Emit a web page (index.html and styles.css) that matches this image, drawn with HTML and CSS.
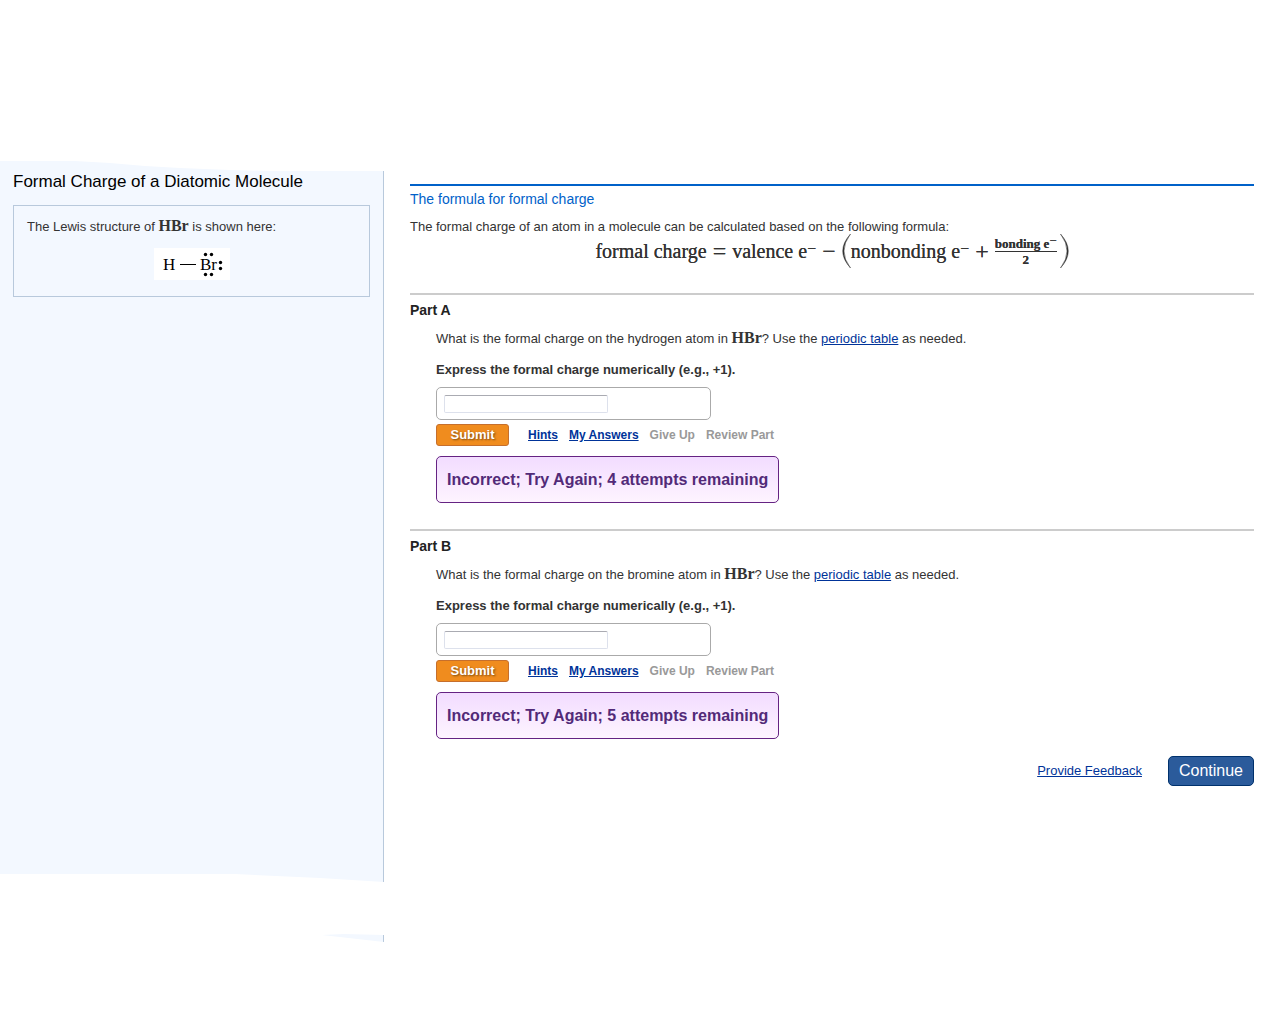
FILE: index.html
```
<!DOCTYPE html>
<html lang="en">
<head>
<meta charset="utf-8">
<meta name="viewport" content="width=device-width, initial-scale=1">
<title>Formal Charge of a Diatomic Molecule</title>
<link rel="stylesheet" href="styles.css">
</head>
<body>
<div class="page">
  <aside class="sidebar">
    <h1 class="title">Formal Charge of a Diatomic Molecule</h1>
    <section class="intro">
      <p class="text">The Lewis structure of <span class="chem">HBr</span> is shown here:</p>
      <svg class="lewis" width="76" height="32" viewBox="0 0 76 32" role="img" aria-label="Lewis structure of HBr">
        <rect width="76" height="32" fill="#fff"/>
        <text x="9" y="22" class="atom">H</text>
        <path d="M26 16.500H42" stroke="#000"/>
        <text x="46" y="22" class="atom">Br</text>
        <g fill="#000"><circle cx="51.500" cy="6.500" r="1.700"/><circle cx="57.500" cy="6.500" r="1.700"/><circle cx="51.500" cy="26.500" r="1.700"/><circle cx="57.500" cy="26.500" r="1.700"/><circle cx="66.500" cy="14.500" r="1.700"/><circle cx="66.500" cy="20.500" r="1.700"/></g>
      </svg>
    </section>
  </aside>
  <main class="main">
    <section class="lesson">
      <h2 class="lesson-title">The formula for formal charge</h2>
      <p class="text">The formal charge of an atom in a molecule can be calculated based on the following formula:</p>
      <div class="formula">
        <span>formal charge</span>
        <span class="op">=</span>
        <span>valence e<sup>−</sup></span>
        <span class="op">−</span>
        <span class="group">
          <svg width="9" height="34" viewBox="0 0 9 34" aria-hidden="true"><path d="M8.500 0Q-7 17 8.500 34Q-4.500 17 8.500 0Z" fill="#333" stroke="#333" stroke-width=".5"/></svg>
          <span>nonbonding e<sup>−</sup></span>
        </span>
        <span class="op">+</span>
        <span class="group wide">
          <span class="fraction"><span class="numerator">bonding e<sup>−</sup></span><span>2</span></span>
          <svg width="9" height="34" viewBox="0 0 9 34" aria-hidden="true"><path d="M.5 0Q16 17 .5 34Q13.500 17 .5 0Z" fill="#333" stroke="#333" stroke-width=".5"/></svg>
        </span>
      </div>
    </section>
    <section class="part">
      <h2 class="part-title">Part A</h2>
      <form class="part-body">
        <p class="text">What is the formal charge on the hydrogen atom in <span class="chem">HBr</span>? Use the <a href="#">periodic table</a> as needed.</p>
        <label class="prompt" for="answer-a">Express the formal charge numerically (e.g., +1).</label>
        <div class="answer"><input id="answer-a" type="text"></div>
        <div class="actions">
          <button class="submit" type="button">Submit</button>
          <a href="#">Hints</a><a href="#">My Answers</a><span>Give Up</span><span>Review Part</span>
        </div>
        <p class="result">Incorrect; Try Again; 4 attempts remaining</p>
      </form>
    </section>
    <section class="part">
      <h2 class="part-title">Part B</h2>
      <form class="part-body">
        <p class="text">What is the formal charge on the bromine atom in <span class="chem">HBr</span>? Use the <a href="#">periodic table</a> as needed.</p>
        <label class="prompt" for="answer-b">Express the formal charge numerically (e.g., +1).</label>
        <div class="answer"><input id="answer-b" type="text"></div>
        <div class="actions">
          <button class="submit" type="button">Submit</button>
          <a href="#">Hints</a><a href="#">My Answers</a><span>Give Up</span><span>Review Part</span>
        </div>
        <p class="result">Incorrect; Try Again; 5 attempts remaining</p>
      </form>
    </section>
    <footer class="footer">
      <a href="#">Provide Feedback</a>
      <button class="continue" type="button">Continue</button>
    </footer>
  </main>
</div>
</body>
</html>
```
FILE: styles.css
```
* { box-sizing: border-box; }
body {
  margin: 0;
  background: #fff;
  color: #333;
  font: 13px/16px "Liberation Sans", Arial, sans-serif;
}
h1, h2, p { margin: 0; font-weight: normal; }
a { color: #039; }
.page {
  display: grid;
  grid-template-columns: 3fr 7fr;
  padding-top: 161px;
}
/* The panel has uneven top and bottom edges, and a loose sliver below it. */
.sidebar {
  padding: 11px 13px;
  background: #f3f8ff;
  border-right: 1px solid #b8c9dc;
  clip-path: polygon(0 0, 75px 0, 110px 2px, 145px 5px, 180px 7px, 230px 9px, 270px 10px, 100% 10px,
    100% calc(100% - 7px), 100% 100%, calc(100% - 62px) calc(100% - 7px), calc(100% - 40px) calc(100% - 8px), 100% calc(100% - 7px),
    100% calc(100% - 60px), calc(100% - 64px) calc(100% - 64px), calc(100% - 149px) calc(100% - 68px), 0 calc(100% - 68px));
}
.title { color: #000; font-size: 17px; line-height: 20px; }
.intro {
  display: flex;
  flex-direction: column;
  gap: 11px;
  margin-top: 13px;
  padding: 10px 13px 16px;
  border: 1px solid #b8c9dc;
}
.text { line-height: 21px; }
.chem { font: bold 16px/16px "Liberation Serif", serif; }
.lewis { align-self: center; }
.atom { font: 17px "Liberation Serif", serif; fill: #000; }
.main { padding: 23px 26px 156px; }
.lesson {
  padding: 4px 0 26px;
  border-top: 2px solid #0061c9;
}
.lesson-title { margin-bottom: 7px; color: #0061c9; font-size: 14px; line-height: 19px; }
.formula {
  display: flex;
  justify-content: center;
  align-items: center;
  gap: 6px;
  height: 32px;
  margin-top: -2px;
  font: 20px/24px "Liberation Serif", serif;
  text-shadow: 0 0 0 #333;
}
.formula sup { font-size: 16px; line-height: 0; vertical-align: 4px; }
.op { font-size: 24px; }
.group { display: flex; align-items: center; }
.wide { gap: 3px; }
.fraction {
  display: flex;
  flex-direction: column;
  align-items: center;
  font: bold 13px/15px "Liberation Serif", serif;
}
.formula .fraction sup { font-size: 13px; font-weight: normal; vertical-align: 3px; }
.numerator { border-bottom: 1px solid #333; }
.part {
  padding: 6px 0 26px;
  border-top: 2px solid #ccc;
}
.part-title { color: #222; font-size: 14px; font-weight: bold; line-height: 18px; }
.part-body { display: flex; flex-direction: column; align-items: flex-start; margin: 9px 26px 0; }
.prompt { margin: 13px 0 9px; font-weight: bold; }
.answer {
  display: flex;
  width: 275px;
  max-width: 100%;
  height: 33px;
  padding: 7px;
  border: 1px solid #aaa;
  border-radius: 5px;
}
.answer input {
  width: 164px;
  height: 18px;
  padding: 1px 4px;
  border: 1px solid #dde1ec;
  border-top-color: #aaabb2;
  border-radius: 2px;
}
.actions {
  display: flex;
  align-items: center;
  gap: 11px;
  margin: 4px 0 10px;
  color: #999;
  font-size: 12px;
  font-weight: bold;
}
.submit {
  width: 73px;
  height: 22px;
  margin-right: 8px;
  padding: 0;
  background: #f08c1e;
  border: 1px solid #c66f2c;
  border-radius: 3px;
  color: #fff;
  font: bold 13px/18px "Liberation Sans", Arial, sans-serif;
  text-shadow: 1px 1px 2px #7b4a10;
}
.result {
  padding: 13px 10px 12px;
  background: linear-gradient(#f2dcff, #fef4ff);
  border: 1px solid #652383;
  border-radius: 5px;
  color: #522a78;
  font-size: 16px;
  font-weight: bold;
  line-height: 20px;
}
.footer {
  display: flex;
  justify-content: flex-end;
  align-items: center;
  gap: 26px;
  margin-top: -9px;
}
.continue {
  height: 30px;
  padding: 0 10px;
  background: #2b5b9b;
  border: 1px solid #00316c;
  border-radius: 5px;
  color: #fff;
  font: 16px/20px "Liberation Sans", Arial, sans-serif;
}
```
